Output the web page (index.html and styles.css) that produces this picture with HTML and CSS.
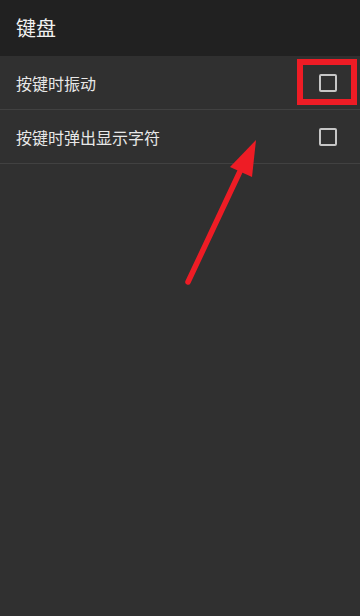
FILE: index.html
```html
<!DOCTYPE html>
<html lang="zh">
<head>
<meta charset="utf-8">
<link rel="stylesheet" href="styles.css">
</head>
<body>
<div class="screen">
  <header class="bar">
    <h1 class="title">键盘</h1>
  </header>
  <ul class="list">
    <li class="row">
      <span class="label">按键时振动</span>
      <span class="check highlighted"><span class="box"></span></span>
    </li>
    <li class="row">
      <span class="label">按键时弹出显示字符</span>
      <span class="check"><span class="box"></span></span>
    </li>
  </ul>
  <svg class="arrow" width="360" height="616" viewBox="0 0 360 616">
    <line x1="188" y1="282" x2="243" y2="165" stroke="#ee1c25" stroke-width="5.5" stroke-linecap="round"/>
    <polygon points="256,140 230,167 252,177" fill="#ee1c25"/>
  </svg>
</div>
</body>
</html>
```

FILE: styles.css
```css
html, body {
  margin: 0;
  padding: 0;
  background: #303030;
}
.screen {
  position: relative;
  width: 360px;
  height: 616px;
  background: #303030;
  font-family: "Noto Sans CJK SC", "Noto Sans", sans-serif;
  overflow: hidden;
}
.bar {
  height: 56px;
  background: #212121;
  display: flex;
  align-items: center;
  padding: 0 16px;
  box-sizing: border-box;
}
.title {
  margin: 0;
  font-size: 20px;
  font-weight: 400;
  color: #f2f2f2;
  line-height: 1;
  padding-bottom: 1px;
}
.list {
  list-style: none;
  margin: 0;
  padding: 0;
}
.row {
  height: 54px;
  box-sizing: border-box;
  border-bottom: 1px solid #414141;
  display: flex;
  align-items: center;
  justify-content: space-between;
  padding: 0 23px 0 16px;
}
.label {
  font-size: 16px;
  color: #e8e8e8;
  line-height: 1;
}
.check {
  position: relative;
  width: 18px;
  height: 18px;
  display: flex;
}
.box {
  width: 18px;
  height: 18px;
  box-sizing: border-box;
  border: 2px solid #c6c6c6;
  border-radius: 2px;
}
.highlighted::after {
  content: "";
  position: absolute;
  left: -22px;
  top: -15px;
  width: 60px;
  height: 46px;
  box-sizing: border-box;
  border: 6px solid #ee1c25;
}
.arrow {
  position: absolute;
  left: 0;
  top: 0;
  pointer-events: none;
}
```
